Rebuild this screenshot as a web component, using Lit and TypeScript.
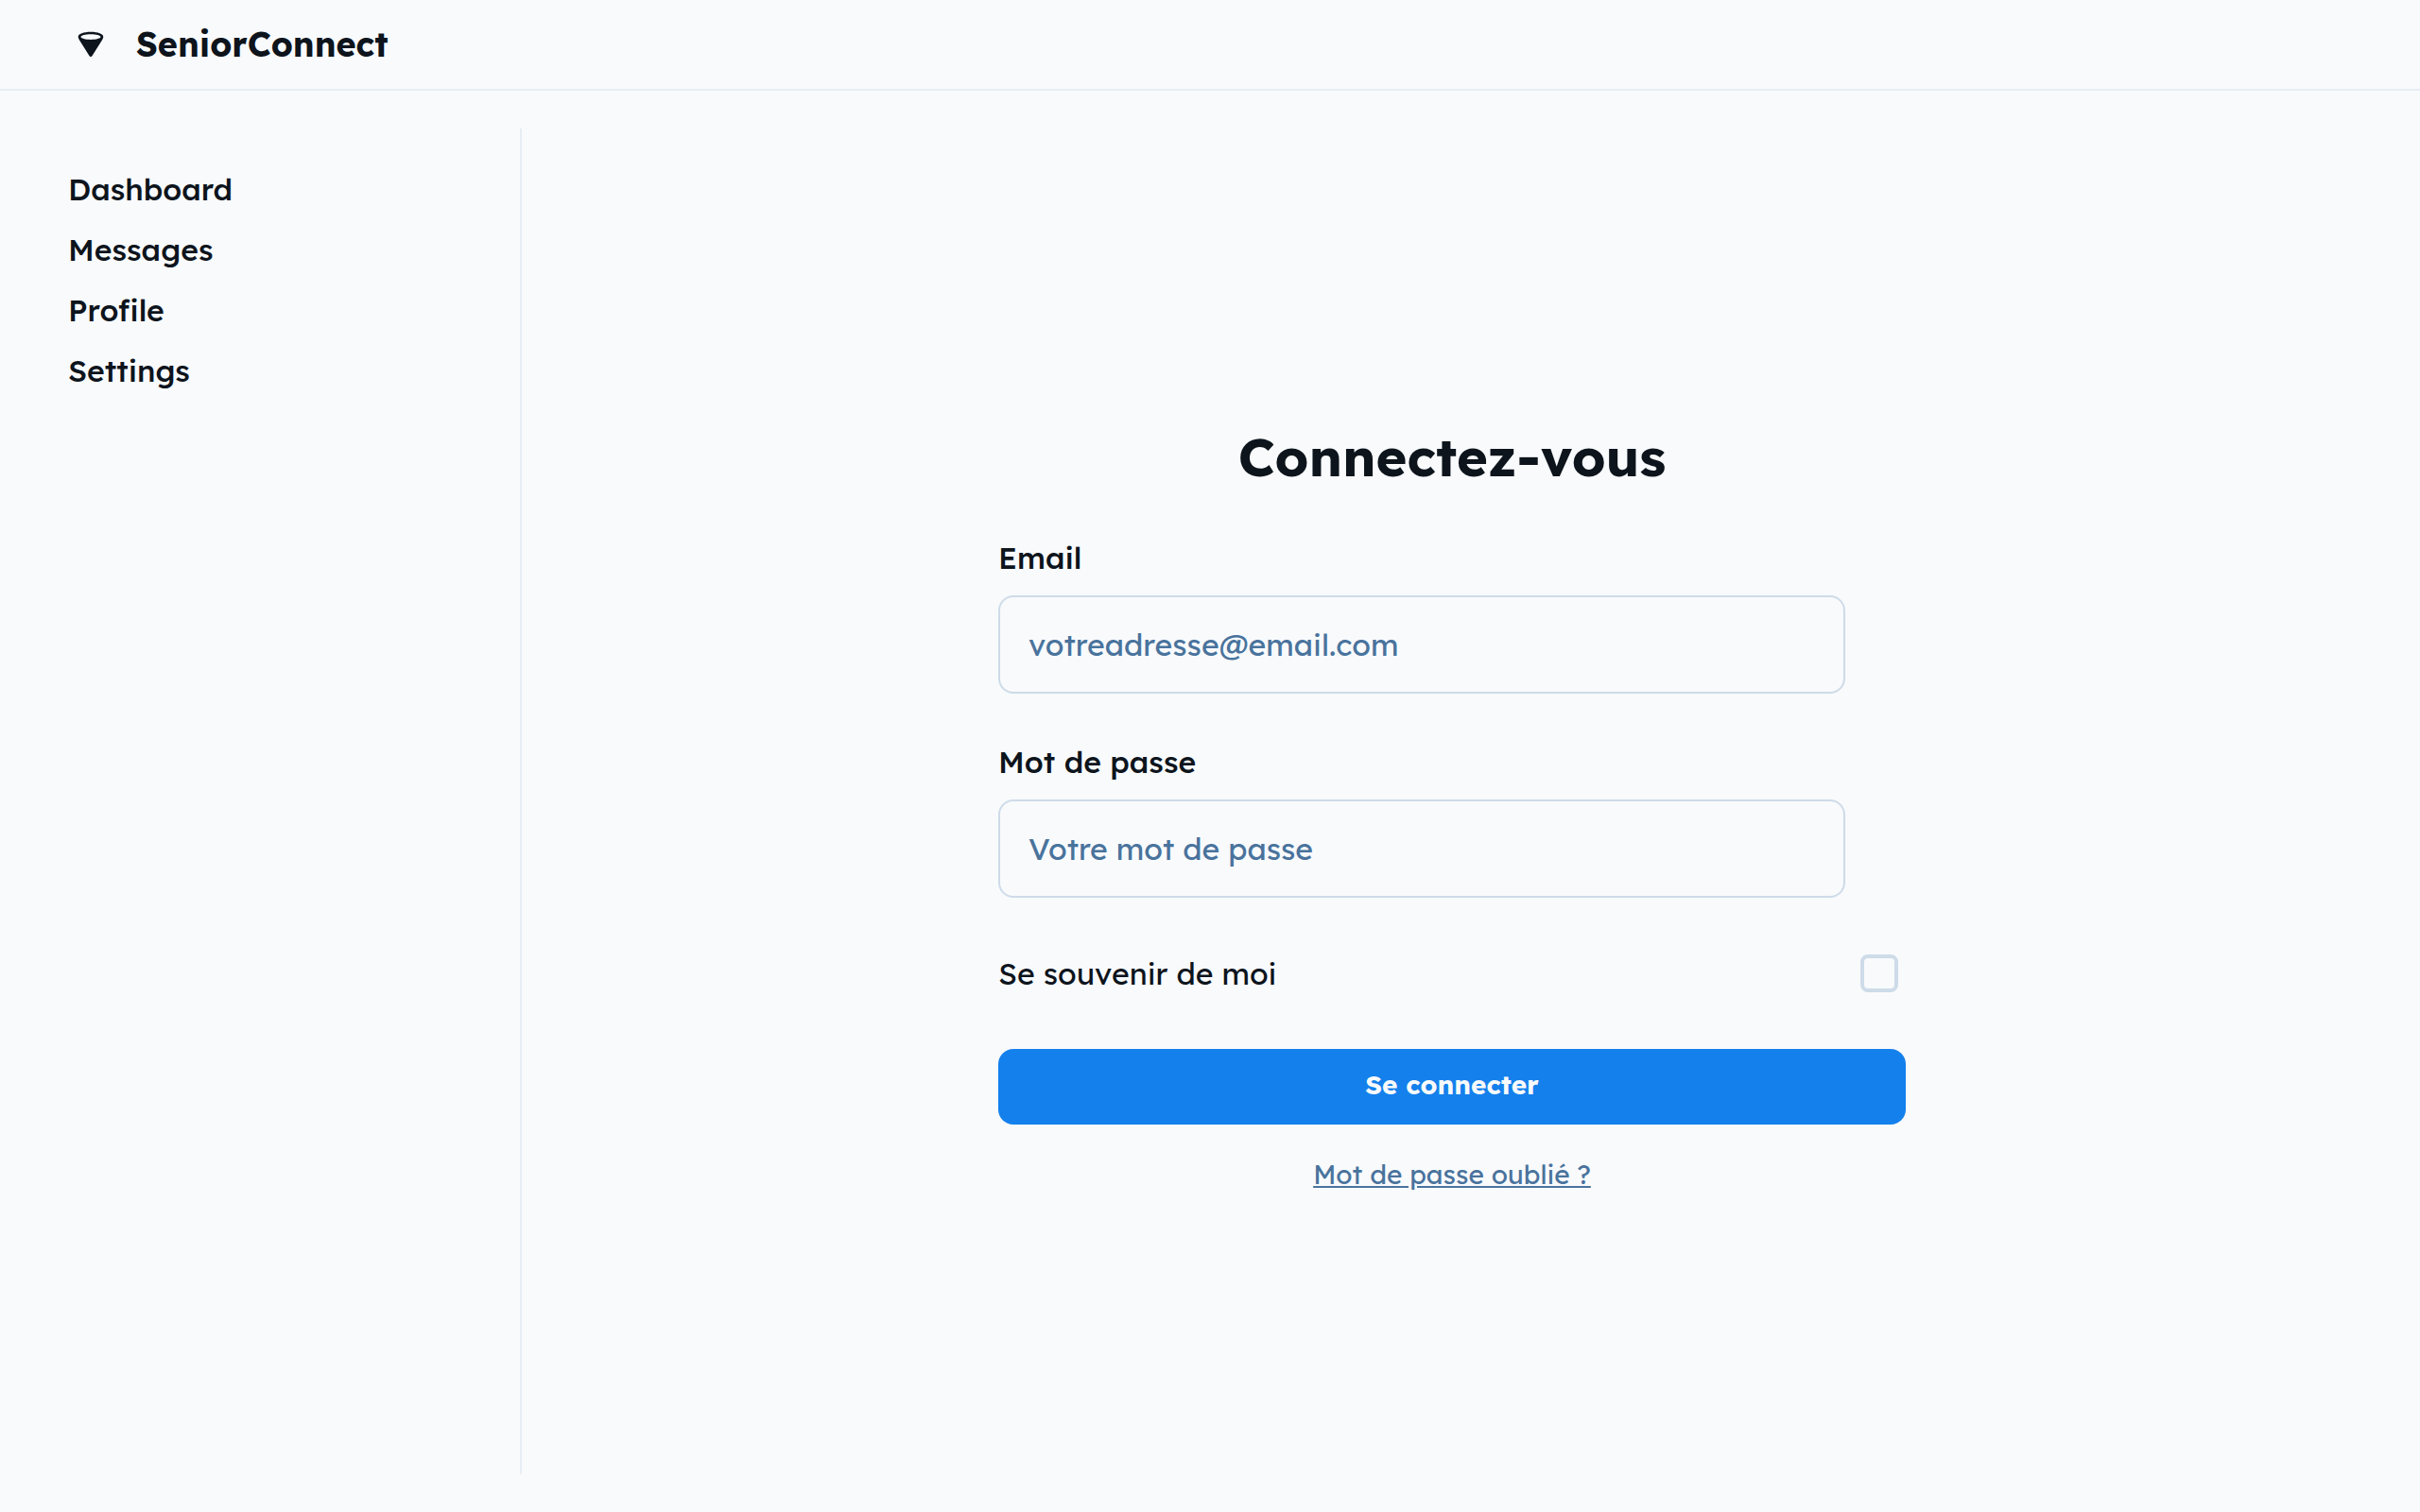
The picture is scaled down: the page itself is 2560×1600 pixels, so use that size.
import { LitElement, html, css } from "lit";
import { customElement } from "lit/decorators.js";

const NAV_ITEMS = ["Dashboard", "Messages", "Profile", "Settings"];

@customElement("app-root")
export class AppRoot extends LitElement {
  static styles = css`
    :host {
      display: flex;
      flex-direction: column;
      min-height: 100vh;
      background: #f8fafc;
      color: #0d141c;
      font-family: Lexend, Inter, "Noto Sans", sans-serif;
      font-feature-settings: "cv11", "ss03";
      font-size: 32px;
      line-height: 48px;
    }
    *,
    *::before {
      box-sizing: border-box;
    }
    .header {
      display: flex;
      align-items: center;
      gap: 32px;
      padding: 24px 80px;
      border-bottom: 2px solid #e7edf4;
    }
    .logo {
      width: 32px;
      height: 32px;
    }
    .brand {
      margin: 0;
      font-size: 36px;
      font-weight: 700;
      line-height: 46px;
    }
    .body {
      flex: 1;
      display: flex;
      gap: 8px;
      padding: 40px 48px;
    }
    .sidebar {
      flex: 0 0 504px;
      padding: 40px 24px;
      border-right: 2px solid #e7edf4;
    }
    .nav {
      display: flex;
      flex-direction: column;
      gap: 16px;
    }
    .nav-link {
      color: inherit;
      font-weight: 500;
      text-decoration: none;
    }
    .content {
      flex: 1;
      display: flex;
      flex-direction: column;
      align-items: center;
      justify-content: center;
    }
    .form {
      width: 100%;
      max-width: 960px;
      display: flex;
      flex-direction: column;
    }
    .title {
      margin: 0;
      padding: 40px 0 24px;
      font-size: 56px;
      font-weight: 700;
      line-height: 70px;
      text-align: center;
    }
    .field {
      display: flex;
      flex-direction: column;
      gap: 16px;
      max-width: 896px;
      padding: 24px 0;
    }
    .label {
      font-weight: 500;
    }
    .input {
      width: 100%;
      padding: 26px 30px;
      border: 2px solid #cedbe8;
      border-radius: 16px;
      background: transparent;
      color: inherit;
      font: inherit;
      font-feature-settings: inherit;
      height: 104px;
    }
    .input::placeholder {
      color: #49739c;
      opacity: 1;
    }
    .remember {
      display: flex;
      align-items: center;
      justify-content: space-between;
      min-height: 112px;
      padding-right: 8px;
    }
    .checkbox {
      appearance: none;
      width: 40px;
      height: 40px;
      margin: 0;
      border: 4px solid #cedbe8;
      border-radius: 8px;
    }
    .checkbox:checked {
      border-color: #1480ec;
      background: #1480ec;
    }
    .submit {
      height: 80px;
      margin: 24px 0;
      padding: 0 40px 4px;
      border: 0;
      border-radius: 16px;
      background: #1480ec;
      color: #f8fafc;
      font: inherit;
      font-feature-settings: inherit;
      font-size: 28px;
      font-weight: 700;
    }
    .forgot {
      align-self: center;
      margin: 8px 0 24px;
      color: #49739c;
      font-size: 28px;
      line-height: 42px;
    }
  `;

  render() {
    return html`
      <header class="header">
        <svg class="logo" viewBox="0 0 32 32" aria-hidden="true">
          <path
            fill="#0d141c"
            fill-rule="evenodd"
            d="M16 2.7C23.6 2.7 29.3 4.9 29.3 7.9C29.3 9 28.8 10 28.1 11.2L17.4 28.3C16.8 29.4 15.2 29.4 14.6 28.3L3.9 11.2C3.2 10 2.7 9 2.7 7.9C2.7 4.9 8.4 2.7 16 2.7ZM16 5.2C10.2 5.2 5.5 6.5 5.5 8.1C5.5 9.7 10.2 11 16 11C21.8 11 26.5 9.7 26.5 8.1C26.5 6.5 21.8 5.2 16 5.2Z"
          ></path>
        </svg>
        <h2 class="brand">SeniorConnect</h2>
      </header>
      <div class="body">
        <aside class="sidebar">
          <nav class="nav">
            ${NAV_ITEMS.map((item) => html`<a class="nav-link" href="#${item.toLowerCase()}">${item}</a>`)}
          </nav>
        </aside>
        <main class="content">
          <form class="form" @submit=${(e: Event) => e.preventDefault()}>
            <h1 class="title">Connectez-vous</h1>
            <div class="field">
              <label class="label" for="email">Email</label>
              <input class="input" id="email" type="email" placeholder="votreadresse@email.com" />
            </div>
            <div class="field">
              <label class="label" for="password">Mot de passe</label>
              <input class="input" id="password" type="password" placeholder="Votre mot de passe" />
            </div>
            <div class="remember">
              <label for="remember">Se souvenir de moi</label>
              <input class="checkbox" id="remember" type="checkbox" />
            </div>
            <button class="submit" type="submit">Se connecter</button>
            <a class="forgot" href="#forgot">Mot de passe oublié ?</a>
          </form>
        </main>
      </div>
    `;
  }
}
